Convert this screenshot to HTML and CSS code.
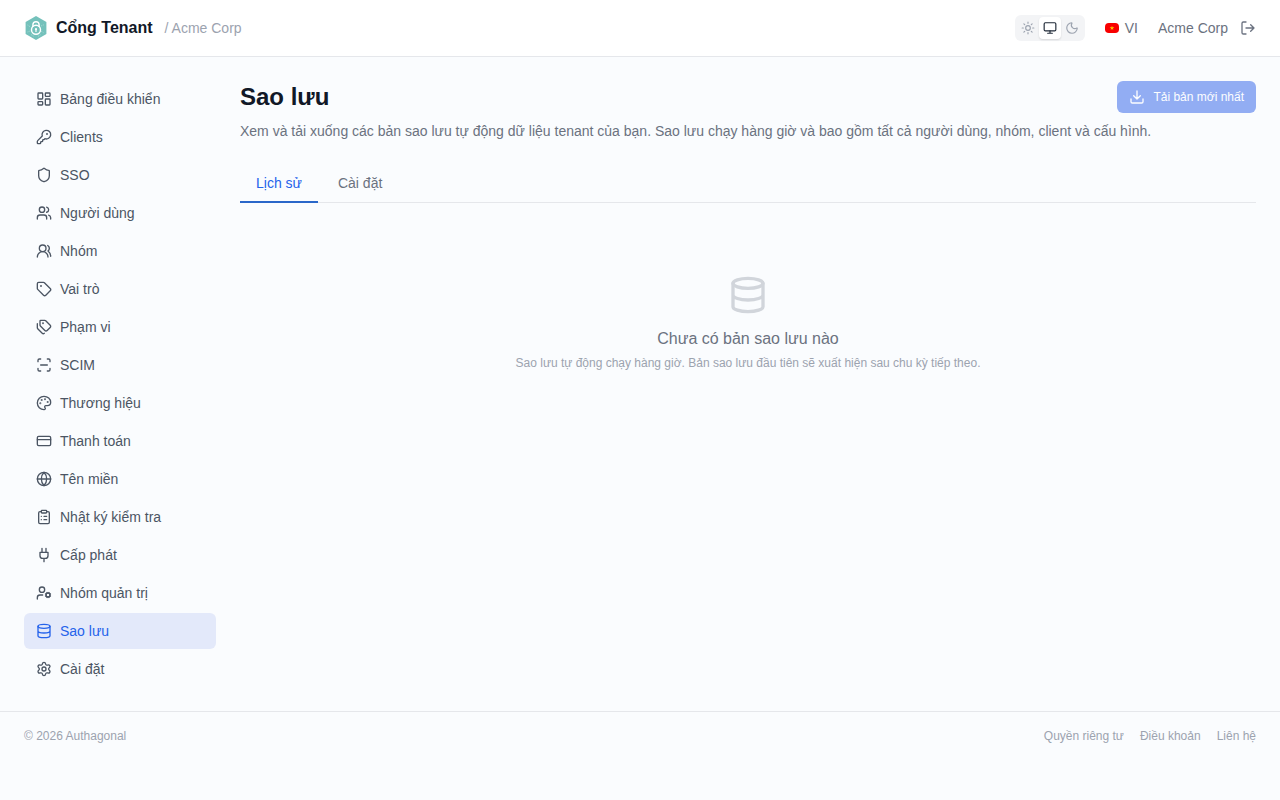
FILE: index.html
```html
<!DOCTYPE html>
<html lang="vi">
<head>
<meta charset="utf-8">
<title>Sao lưu</title>
<link rel="stylesheet" href="styles.css">
</head>
<body>
<header class="topbar">
  <div class="brand">
    <svg class="logo" viewBox="0 0 24 24">
      <path fill="#74c1bb" d="M12 0 22.400 6v12L12 24 1.600 18V6z"/>
      <g fill="none" stroke="#b4e0db" stroke-width=".8" stroke-dasharray="1 1"><path d="M3.500 9l3 2M3.500 16l4-1.500M17 10l3.500-1.500M17 15l3 2M7 18.500l3 2M14 20.500l3-2"/></g>
      <g fill="none" stroke="#fff" stroke-width="1.400"><path d="M8.900 11V8.800a3.100 3.100 0 0 1 6.200 0V11"/><circle cx="12" cy="13.800" r="4.500"/></g>
      <circle cx="12" cy="13.200" r="1.100" fill="#fff"/><path fill="#fff" d="M11.400 13.500h1.200v2.600h-1.200z"/>
    </svg>
    <span class="brand-name">Cổng Tenant</span>
    <span class="tenant">/ Acme Corp</span>
  </div>
  <div class="actions">
    <div class="theme">
      <span class="theme-btn"><svg class="icon" viewBox="0 0 24 24"><circle cx="12" cy="12" r="4"/><path d="M12 2v2M12 20v2M4.930 4.930l1.410 1.410M17.660 17.660l1.410 1.410M2 12h2M20 12h2M6.340 17.660l-1.410 1.410M19.070 4.930l-1.410 1.410"/></svg></span>
      <span class="theme-btn on"><svg class="icon" viewBox="0 0 24 24"><rect width="20" height="14" x="2" y="3" rx="2"/><path d="M8 21h8M12 17v4"/></svg></span>
      <span class="theme-btn"><svg class="icon" viewBox="0 0 24 24"><path d="M20.985 12.486a9 9 0 1 1-9.473-9.472c.405-.022.617.46.402.803a6 6 0 0 0 8.268 8.268c.344-.215.825-.004.803.401"/></svg></span>
    </div>
    <div class="lang">
      <svg class="flag" viewBox="0 0 14 10"><rect width="14" height="10" rx="3.800" fill="#f80000"/><path fill="#ffc400" d="M7 2.700l.55 1.650h1.750L7.900 5.400l.5 1.700L7 6.100 5.600 7.100l.5-1.700-1.400-1.050h1.750z"/></svg>
      <span>VI</span>
    </div>
    <div class="account">
      <span>Acme Corp</span>
      <svg class="icon" viewBox="0 0 24 24"><path d="m16 17 5-5-5-5M21 12H9M9 21H5a2 2 0 0 1-2-2V5a2 2 0 0 1 2-2h4"/></svg>
    </div>
  </div>
</header>
<div class="shell">
  <nav class="sidebar">
    <a class="nav-item"><svg class="icon" viewBox="0 0 24 24"><rect width="7" height="9" x="3" y="3" rx="1"/><rect width="7" height="5" x="14" y="3" rx="1"/><rect width="7" height="9" x="14" y="12" rx="1"/><rect width="7" height="5" x="3" y="16" rx="1"/></svg>Bảng điều khiển</a>
    <a class="nav-item"><svg class="icon" viewBox="0 0 24 24"><path d="M2.586 17.414A2 2 0 0 0 2 18.828V21a1 1 0 0 0 1 1h3a1 1 0 0 0 1-1v-1a1 1 0 0 1 1-1h1a1 1 0 0 0 1-1v-1a1 1 0 0 1 1-1h.172a2 2 0 0 0 1.414-.586l.814-.814a6.500 6.500 0 1 0-4-4z"/><circle class="dot" cx="16.500" cy="7.500" r=".5"/></svg>Clients</a>
    <a class="nav-item"><svg class="icon" viewBox="0 0 24 24"><path d="M20 13c0 5-3.500 7.500-7.660 8.950a1 1 0 0 1-.67-.01C7.500 20.500 4 18 4 13V6a1 1 0 0 1 1-1c2 0 4.500-1.200 6.240-2.720a1.170 1.170 0 0 1 1.520 0C14.510 3.810 17 5 19 5a1 1 0 0 1 1 1z"/></svg>SSO</a>
    <a class="nav-item"><svg class="icon" viewBox="0 0 24 24"><path d="M16 21v-2a4 4 0 0 0-4-4H6a4 4 0 0 0-4 4v2M16 3.128a4 4 0 0 1 0 7.744M22 21v-2a4 4 0 0 0-3-3.870"/><circle cx="9" cy="7" r="4"/></svg>Người dùng</a>
    <a class="nav-item"><svg class="icon" viewBox="0 0 24 24"><path d="M18 21a8 8 0 0 0-16 0"/><circle cx="10" cy="8" r="5"/><path d="M22 20c0-3.370-2-6.500-4-8a5 5 0 0 0-.45-8.300"/></svg>Nhóm</a>
    <a class="nav-item"><svg class="icon" viewBox="0 0 24 24"><path d="M12.586 2.586A2 2 0 0 0 11.172 2H4a2 2 0 0 0-2 2v7.172a2 2 0 0 0 .586 1.414l8.704 8.704a2.426 2.426 0 0 0 3.420 0l6.580-6.580a2.426 2.426 0 0 0 0-3.420z"/><circle class="dot" cx="7.500" cy="7.500" r=".5"/></svg>Vai trò</a>
    <a class="nav-item"><svg class="icon" viewBox="0 0 24 24"><path d="M13.172 2a2 2 0 0 1 1.414.586l6.710 6.710a2.400 2.400 0 0 1 0 3.408l-4.592 4.592a2.400 2.400 0 0 1-3.408 0l-6.710-6.710A2 2 0 0 1 6 9.172V3a1 1 0 0 1 1-1z"/><path d="M2 7v6.172a2 2 0 0 0 .586 1.414l6.710 6.710a2.400 2.400 0 0 0 3.191.193"/><circle class="dot" cx="10.500" cy="6.500" r=".5"/></svg>Phạm vi</a>
    <a class="nav-item"><svg class="icon" viewBox="0 0 24 24"><path d="M3 7V5a2 2 0 0 1 2-2h2M17 3h2a2 2 0 0 1 2 2v2M21 17v2a2 2 0 0 1-2 2h-2M7 21H5a2 2 0 0 1-2-2v-2M7 12h10"/></svg>SCIM</a>
    <a class="nav-item"><svg class="icon" viewBox="0 0 24 24"><path d="M12 22a1 1 0 0 1 0-20 10 9 0 0 1 10 9 5 5 0 0 1-5 5h-2.250a1.750 1.750 0 0 0-1.400 2.800l.3.4a1.750 1.750 0 0 1-1.400 2.800z"/><circle class="dot" cx="13.500" cy="6.500" r=".5"/><circle class="dot" cx="17.500" cy="10.500" r=".5"/><circle class="dot" cx="6.500" cy="12.500" r=".5"/><circle class="dot" cx="8.500" cy="7.500" r=".5"/></svg>Thương hiệu</a>
    <a class="nav-item"><svg class="icon" viewBox="0 0 24 24"><rect width="20" height="14" x="2" y="5" rx="2"/><path d="M2 10h20"/></svg>Thanh toán</a>
    <a class="nav-item"><svg class="icon" viewBox="0 0 24 24"><circle cx="12" cy="12" r="10"/><path d="M12 2a14.500 14.500 0 0 0 0 20 14.500 14.500 0 0 0 0-20M2 12h20"/></svg>Tên miền</a>
    <a class="nav-item"><svg class="icon" viewBox="0 0 24 24"><rect width="8" height="4" x="8" y="2" rx="1"/><path d="M16 4h2a2 2 0 0 1 2 2v14a2 2 0 0 1-2 2H6a2 2 0 0 1-2-2V6a2 2 0 0 1 2-2h2M12 11h4M12 16h4M8 11h.01M8 16h.01"/></svg>Nhật ký kiểm tra</a>
    <a class="nav-item"><svg class="icon" viewBox="0 0 24 24"><path d="M12 22v-5M9 8V2M15 8V2M18 8v5a4 4 0 0 1-4 4h-4a4 4 0 0 1-4-4V8Z"/></svg>Cấp phát</a>
    <a class="nav-item"><svg class="icon" viewBox="0 0 24 24"><path d="M10 15H6a4 4 0 0 0-4 4v2"/><path d="m14.305 16.530.923-.382M15.228 13.852l-.923-.383M16.852 12.228l-.383-.923M16.852 17.772l-.383.924M19.148 12.228l.383-.923M19.530 18.696l-.382-.924M20.772 13.852l.924-.383M20.772 16.148l.924.383"/><circle cx="18" cy="15" r="3"/><circle cx="9" cy="7" r="4"/></svg>Nhóm quản trị</a>
    <a class="nav-item active"><svg class="icon" viewBox="0 0 24 24"><ellipse cx="12" cy="5" rx="9" ry="3"/><path d="M3 5v14a9 3 0 0 0 18 0V5M3 12a9 3 0 0 0 18 0"/></svg>Sao lưu</a>
    <a class="nav-item"><svg class="icon" viewBox="0 0 24 24"><path d="M9.671 4.136a2.340 2.340 0 0 1 4.659 0 2.340 2.340 0 0 0 3.319 1.915 2.340 2.340 0 0 1 2.330 4.033 2.340 2.340 0 0 0 0 3.831 2.340 2.340 0 0 1-2.330 4.033 2.340 2.340 0 0 0-3.319 1.915 2.340 2.340 0 0 1-4.659 0 2.340 2.340 0 0 0-3.320-1.915 2.340 2.340 0 0 1-2.330-4.033 2.340 2.340 0 0 0 0-3.831A2.340 2.340 0 0 1 6.350 6.051a2.340 2.340 0 0 0 3.319-1.915"/><circle cx="12" cy="12" r="3"/></svg>Cài đặt</a>
  </nav>
  <main class="content">
    <div class="heading">
      <h1 class="title">Sao lưu</h1>
      <button class="download" disabled><svg class="icon" viewBox="0 0 24 24"><path d="M12 15V3M21 15v4a2 2 0 0 1-2 2H5a2 2 0 0 1-2-2v-4M7 10l5 5 5-5"/></svg>Tải bản mới nhất</button>
    </div>
    <p class="lead">Xem và tải xuống các bản sao lưu tự động dữ liệu tenant của bạn. Sao lưu chạy hàng giờ và bao gồm tất cả người dùng, nhóm, client và cấu hình.</p>
    <div class="tabs">
      <span class="tab selected">Lịch sử</span>
      <span class="tab">Cài đặt</span>
    </div>
    <section class="empty">
      <svg class="icon empty-icon" viewBox="0 0 24 24"><ellipse cx="12" cy="5" rx="9" ry="3"/><path d="M3 5v14a9 3 0 0 0 18 0V5M3 12a9 3 0 0 0 18 0"/></svg>
      <p class="empty-title">Chưa có bản sao lưu nào</p>
      <p class="empty-note">Sao lưu tự động chạy hàng giờ. Bản sao lưu đầu tiên sẽ xuất hiện sau chu kỳ tiếp theo.</p>
    </section>
  </main>
</div>
<footer class="footer">
  <span>© 2026 Authagonal</span>
  <div class="links"><a>Quyền riêng tư</a><a>Điều khoản</a><a>Liên hệ</a></div>
</footer>
</body>
</html>
```

FILE: styles.css
```css
* { box-sizing: border-box; }
body {
  margin: 0;
  min-height: 100vh;
  background: #fafcfe;
  color: #4b5563;
  font: 14px/20px "Liberation Sans", Arial, sans-serif;
}
h1, p { margin: 0; }
.icon {
  display: block;
  flex: none;
  width: 16px;
  height: 16px;
  fill: none;
  stroke: currentColor;
  stroke-width: 2;
  stroke-linecap: round;
  stroke-linejoin: round;
}
.dot { fill: currentColor; }

.topbar {
  display: flex;
  align-items: center;
  justify-content: space-between;
  height: 57px;
  padding: 0 24px;
  background: #fff;
  border-bottom: 1px solid #e5e7eb;
}
.brand, .actions, .lang, .account { display: flex; align-items: center; }
.logo { width: 24px; height: 24px; }
.brand-name { margin-left: 8px; color: #111827; font-size: 16px; font-weight: 700; }
.tenant { margin-left: 12px; color: #9ca3af; }
.actions { gap: 20px; color: #6b7280; }
.theme { display: flex; padding: 2px; border-radius: 6px; background: #f3f4f6; color: #9ca3af; }
.theme-btn { padding: 4px; border-radius: 4px; }
.theme-btn .icon { width: 14px; height: 14px; }
.theme-btn.on { background: #fff; color: #1f2937; box-shadow: 0 1px 2px rgba(0, 0, 0, .12); }
.lang { gap: 6px; }
.flag { width: 14px; height: 10px; }
.account { gap: 12px; }

.shell { display: flex; gap: 24px; padding: 24px; }
.sidebar { display: flex; flex: none; flex-direction: column; gap: 2px; width: 192px; }
.nav-item {
  display: flex;
  align-items: center;
  gap: 8px;
  padding: 8px 12px;
  border-radius: 6px;
}
.nav-item.active { background: #e3e9fa; color: #2563eb; }

.content { flex: 1; min-width: 0; }
.heading { display: flex; align-items: center; justify-content: space-between; }
.title { color: #111827; font-size: 24px; line-height: 32px; }
.download {
  display: flex;
  align-items: center;
  gap: 8px;
  height: 32px;
  padding: 0 12px;
  border: 0;
  border-radius: 6px;
  background: #92adf3;
  color: #fcfdff;
  font: 12px/16px "Liberation Sans", Arial, sans-serif;
}
.lead { margin-top: 8px; color: #6b7280; }
.tabs { display: flex; gap: 4px; height: 38px; margin-top: 24px; border-bottom: 1px solid #e5e7eb; }
.tab { height: 38px; padding: 8px 16px; color: #6b7280; }
.tab.selected { border-bottom: 2px solid #2a67c9; color: #2563eb; }
.empty { display: flex; flex-direction: column; align-items: center; padding-top: 72px; }
.empty-icon { width: 40px; height: 40px; color: #d1d5db; }
.empty-title { margin-top: 12px; color: #6b7280; font-size: 16px; line-height: 24px; }
.empty-note { margin-top: 4px; color: #9ca3af; font-size: 12px; line-height: 16px; }

.footer {
  display: flex;
  justify-content: space-between;
  padding: 16px 24px;
  border-top: 1px solid #e5e7eb;
  color: #9ca3af;
  font-size: 12px;
  line-height: 16px;
}
.links { display: flex; gap: 16px; }
```
